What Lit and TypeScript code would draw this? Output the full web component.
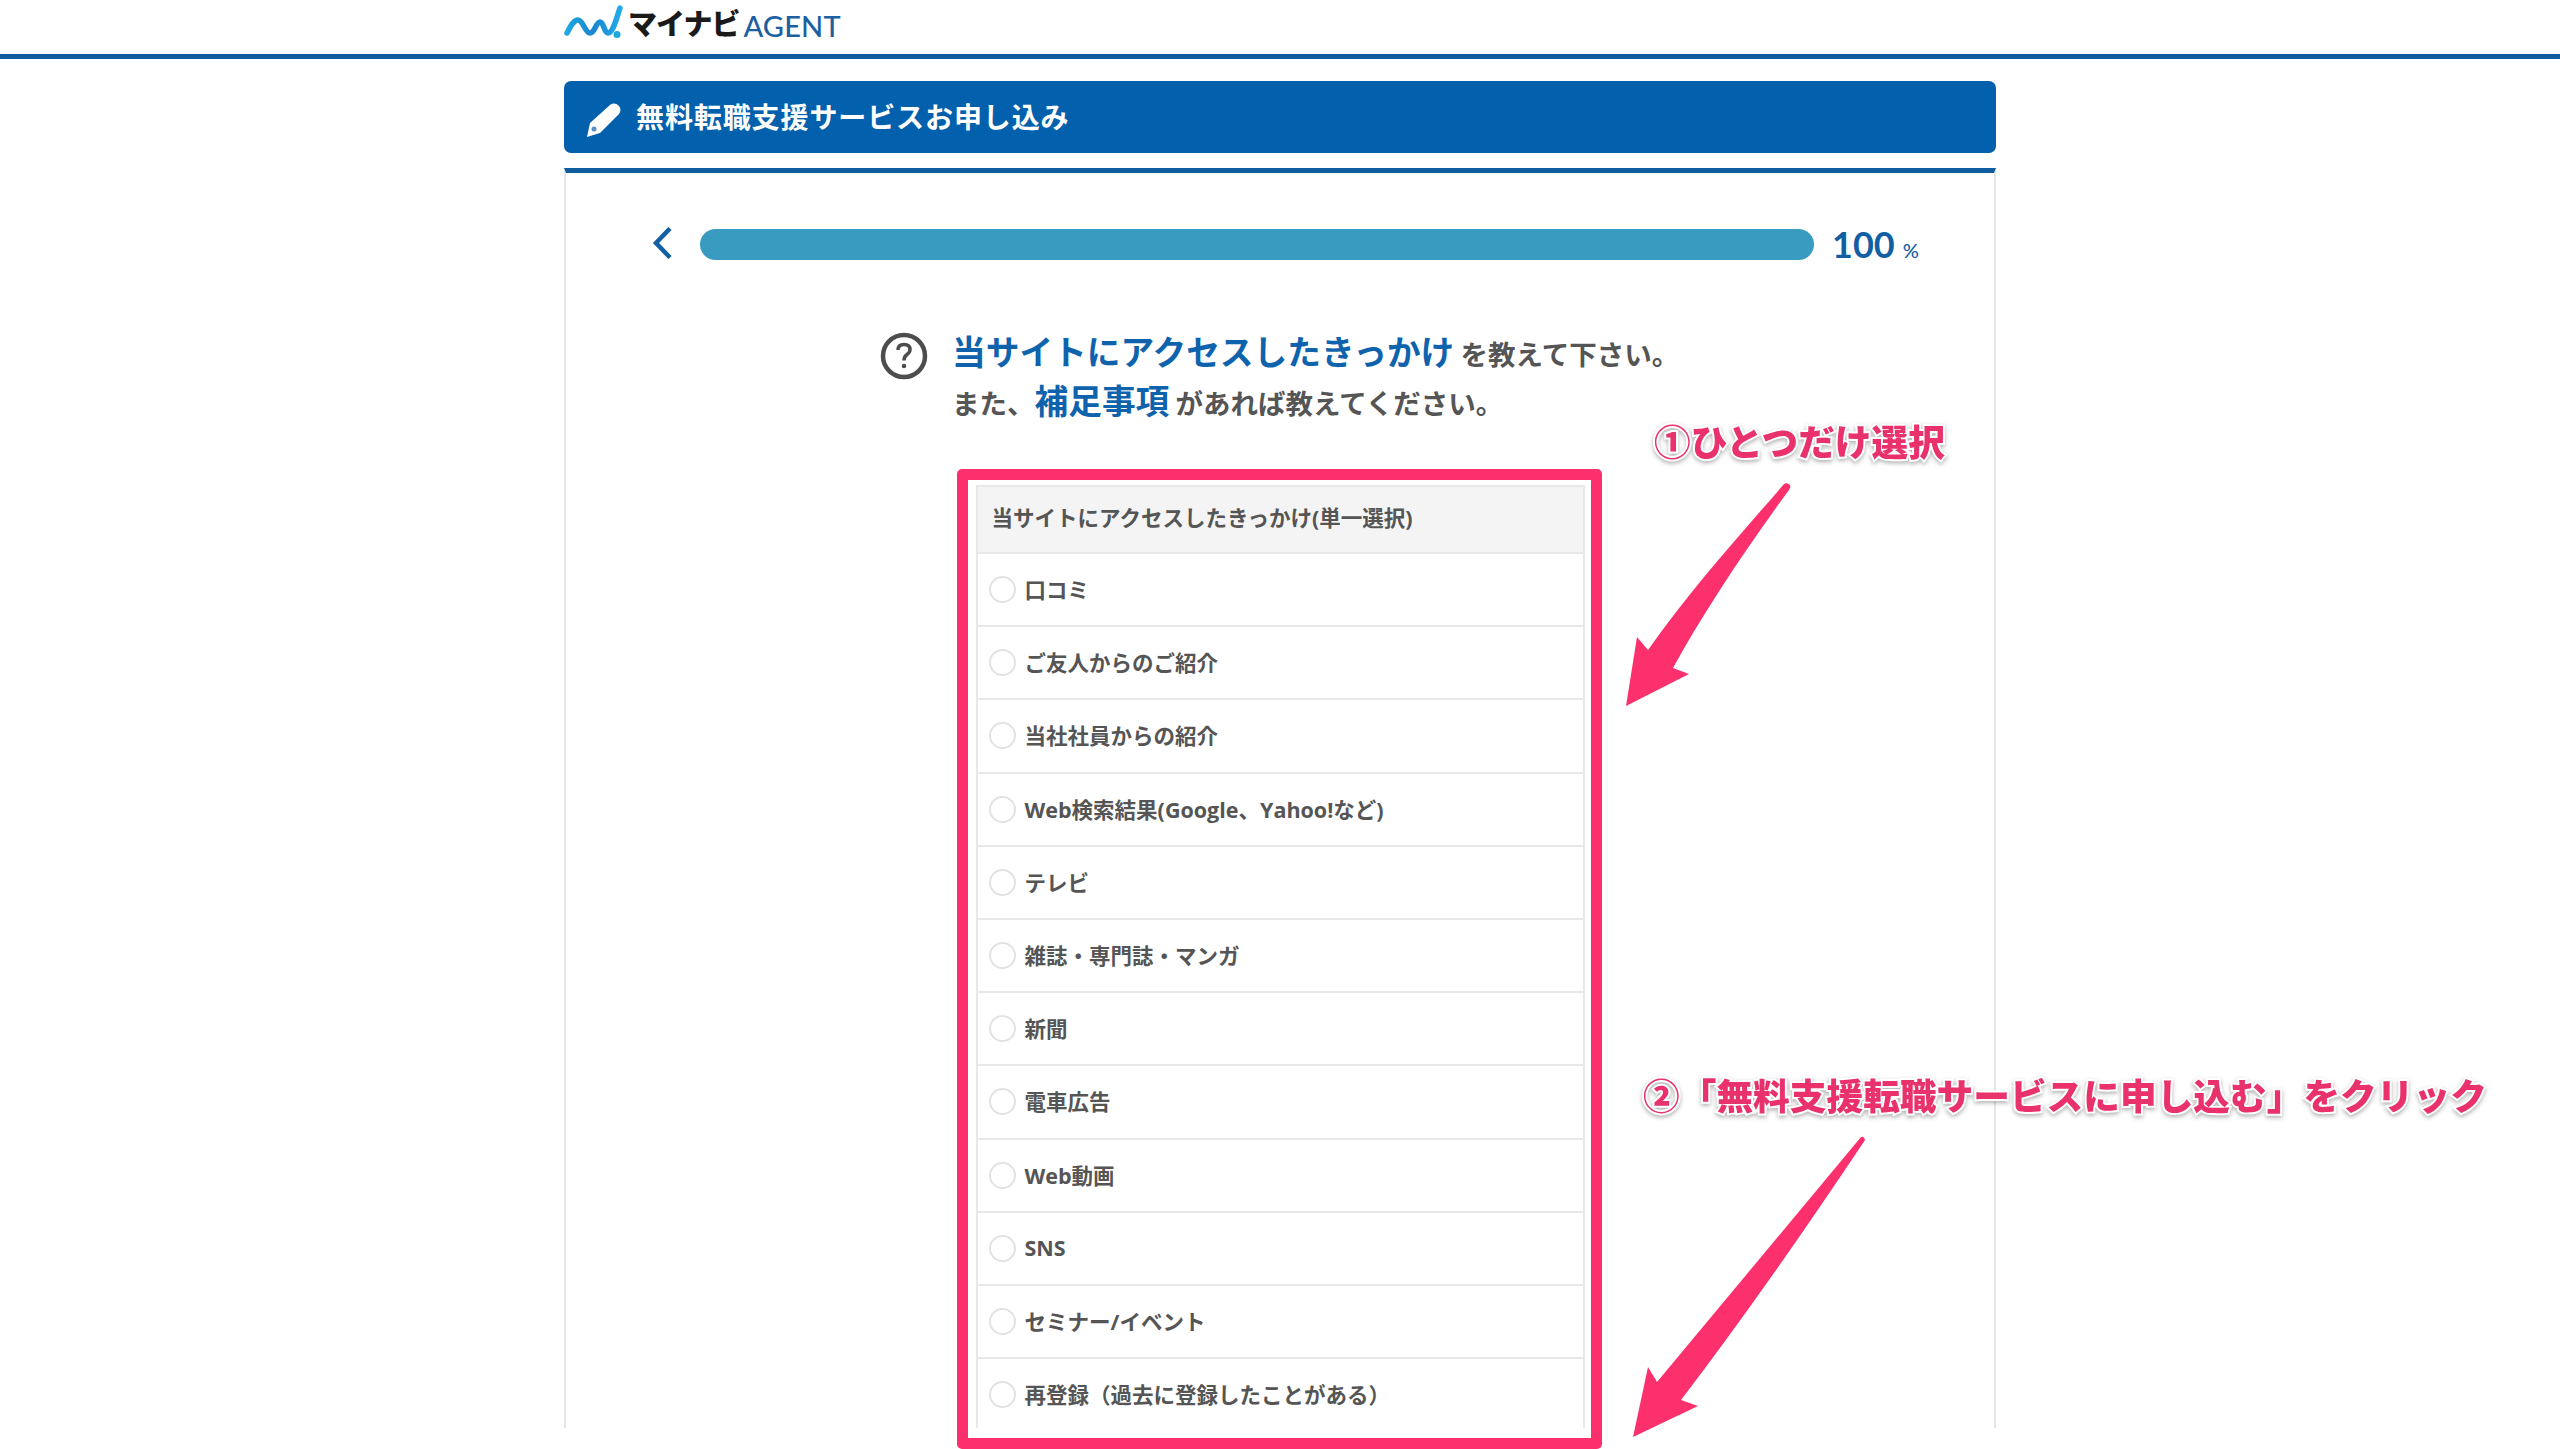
import { LitElement, html, css } from "lit";
import { customElement } from "lit/decorators.js";

const OPTIONS = [
  "口コミ",
  "ご友人からのご紹介",
  "当社社員からの紹介",
  "Web検索結果(Google、Yahoo!など)",
  "テレビ",
  "雑誌・専門誌・マンガ",
  "新聞",
  "電車広告",
  "Web動画",
  "SNS",
  "セミナー/イベント",
  "再登録（過去に登録したことがある）",
];

@customElement("app-root")
export class AppRoot extends LitElement {
  static styles = css`
    :host {
      display: block;
      position: relative;
      height: 1449px;
      overflow: hidden;
      background: #fff;
      font-family: "Noto Sans CJK JP", "Noto Sans", sans-serif;
      color: #555;
    }
    .header {
      height: 54px;
      border-bottom: 5px solid #0f5c9e;
      box-sizing: content-box;
    }
    .header-inner {
      width: 1432px;
      margin: 0 auto;
      height: 54px;
      display: flex;
      align-items: center;
      gap: 4px;
    }
    .logo-mark { width: 60px; height: 36px; flex: none; margin-top: -8px; }
    .logo-jp {
      font-size: 29px; font-weight: 900; color: #1a1a1a; line-height: 1;
      letter-spacing: -1px; margin-top: -10px;
    }
    .logo-en {
      font-family: "Lato", sans-serif; font-size: 29px; font-weight: 500; color: #1d5fa0; line-height: 1;
      margin: -4px 0 0 0; letter-spacing: 0.2px;
    }
    .main { width: 1432px; margin: 22px auto 0; }
    .title {
      height: 72px;
      box-sizing: border-box;
      padding: 0 0 3px 22px;
      background: #0360ac;
      border-radius: 7px;
      display: flex;
      align-items: center;
      gap: 14px;
      color: #fff;
      font-size: 28px;
      font-weight: 700;
      letter-spacing: 0.9px;
    }
    .pencil { width: 36px; height: 36px; flex: none; margin-top: 6px; }
    .panel {
      margin-top: 15px;
      height: 1260px;
      box-sizing: border-box;
      border-top: 5px solid #0f5c9e;
      border-left: 2px solid #e6e6e6;
      border-right: 2px solid #e6e6e6;
      overflow: hidden;
      display: flex;
      flex-direction: column;
    }
    .progress {
      display: flex;
      align-items: center;
      height: 31px;
      margin-top: 56px;
      padding-left: 86px;
    }
    .back { width: 20px; height: 32px; flex: none; margin-top: -3px; }
    .bar { width: 1114px; height: 31px; margin-left: 28px; background: #3a9bc1; border-radius: 16px; }
    .pct {
      margin: -2px 0 0 18px; color: #125fa3; font-family: "Lato", sans-serif; font-weight: 700;
      font-size: 36px; line-height: 1; display: flex; align-items: baseline; gap: 8px;
    }
    .pct small { font-size: 20px; font-weight: 500; }
    .question {
      display: flex;
      gap: 24px;
      margin: 68px 0 0 314px;
    }
    .q-icon { width: 48px; height: 48px; flex: none; margin-top: 4px; }
    .q-text { font-size: 27.5px; font-weight: 700; color: #555; line-height: 50px; }
    .q-line { height: 49px; white-space: nowrap; }
    .q-text b { font-size: 33.7px; font-weight: 700; color: #0f63ad; line-height: 1; }
    .form {
      width: 609px;
      margin: 59px auto 0;
      box-sizing: border-box;
      border-left: 2px solid #e8e8e8;
      border-right: 2px solid #e8e8e8;
      border-top: 2px solid #e8e8e8;
      flex: none;
      font-family: "Open Sans", "Noto Sans CJK JP", sans-serif;
    }
    .form-head {
      height: 65px;
      box-sizing: border-box;
      padding: 0 0 6px 14px;
      background: #f4f4f4;
      display: flex;
      align-items: center;
      font-size: 21.5px;
      font-weight: 700;
    }
    .head-rule { height: 2px; background: #e8e8e8; }
    .row {
      height: 71.2px;
      border-bottom: 2px solid #e8e8e8;
      display: flex;
      align-items: center;
      padding-left: 11px;
      gap: 9px;
      font-size: 21.5px;
      font-weight: 700;
    }
    .row-label { margin-top: -2px; }
    .radio {
      width: 27px; height: 27px; box-sizing: border-box;
      border: 2px solid #e2e2e2; border-radius: 50%; background: #fff; flex: none;
    }
    .frame {
      position: absolute;
      left: 957px; top: 469px; width: 645px; height: 980px;
      box-sizing: border-box;
      border: 11px solid #fc306d;
      border-radius: 5px;
      pointer-events: none;
    }
    .note {
      position: absolute;
      font-size: 36.7px;
      font-weight: 900;
      line-height: 1;
      white-space: nowrap;
      color: #e9316c;
      -webkit-text-stroke: 4px #fff;
      paint-order: stroke fill;
      filter: drop-shadow(0 2px 2px rgba(0,0,0,.3));
    }
    .n1 { left: 1654px; top: 422px; }
    .n2 { left: 1643px; top: 1076px; }
    .arrows { position: absolute; left: 0; top: 0; width: 2560px; height: 1449px; pointer-events: none; }
  `;

  render() {
    return html`
      <div class="header">
        <div class="header-inner">
          <svg class="logo-mark" viewBox="0 0 60 36">
            <defs>
              <linearGradient id="lg" x1="0" x2="1" y1="0" y2="0">
                <stop offset="0" stop-color="#1ea7e0" />
                <stop offset="0.5" stop-color="#1a86cf" />
                <stop offset="1" stop-color="#22abe8" />
              </linearGradient>
            </defs>
            <path d="M3 28 C7 20 10 15 14 15 C19 15 21 28 26 28 C31 28 32 17 36 17 C40 17 40 28 44 28 C49 28 53 12 56 3" fill="none" stroke="url(#lg)" stroke-width="5.500" stroke-linecap="round" />
            <circle cx="53" cy="29.500" r="3.500" fill="#1ea7e0" />
          </svg>
          <span class="logo-jp">マイナビ</span>
          <span class="logo-en">AGENT</span>
        </div>
      </div>
      <div class="main">
        <div class="title">
          <svg class="pencil" viewBox="0 0 36 36">
            <path d="M24.500 3.500 Q29 1 33 5 Q36 9 33 13 L14 32 L1 36 L4 22 Z" fill="#fff" />
            <circle cx="8" cy="28" r="2.500" fill="#5c8fc0" />
          </svg>
          <span>無料転職支援サービスお申し込み</span>
        </div>
        <div class="panel">
          <div class="progress">
            <svg class="back" viewBox="0 0 20 32">
              <path d="M18 1.500 L4 16 L18 30.500" fill="none" stroke="#125fa3" stroke-width="4.500" />
            </svg>
            <div class="bar"></div>
            <div class="pct">100<small>%</small></div>
          </div>
          <div class="question">
            <svg class="q-icon" viewBox="0 0 48 48">
              <circle cx="24" cy="24" r="21" fill="none" stroke="#4d4d4d" stroke-width="4.500" />
              <path d="M18 18 Q18 12.500 24 12.500 Q30 12.500 30 17.500 Q30 20.500 27 22.500 Q24 24.500 24 28.500" fill="none" stroke="#4d4d4d" stroke-width="3.500" />
              <circle cx="24" cy="34" r="2.300" fill="#4d4d4d" />
            </svg>
            <div class="q-text">
              <div class="q-line"><b>当サイトにアクセスしたきっかけ</b> を教えて下さい。</div>
              <div class="q-line">また、<b>補足事項</b> があれば教えてください。</div>
            </div>
          </div>
          <div class="form">
            <div class="form-head">当サイトにアクセスしたきっかけ(単一選択)</div>
            <div class="head-rule"></div>
            ${OPTIONS.map(
              (o) => html`<div class="row"><span class="radio"></span><span class="row-label">${o}</span></div>`
            )}
          </div>
        </div>
      </div>
      <div class="frame"></div>
      <svg class="arrows" viewBox="0 0 2560 1449">
        <path d="M1784 484 Q1787 482 1790 485 Q1791 487 1789 490 C1745 550 1705 610 1673 668 L1689 674 L1626 706 L1637 637 L1648 650 C1690 590 1740 535 1784 484 Z" fill="#fc306d" />
        <path d="M1861 1137 Q1864 1136 1865 1140 Q1765 1290 1681 1400 L1698 1406 L1633 1437 L1648 1367 L1657 1382 L1861 1137 Z" fill="#fc306d" />
      </svg>
      <div class="note n1">①ひとつだけ選択</div>
      <div class="note n2">②「無料支援転職サービスに申し込む」をクリック</div>
    `;
  }
}
